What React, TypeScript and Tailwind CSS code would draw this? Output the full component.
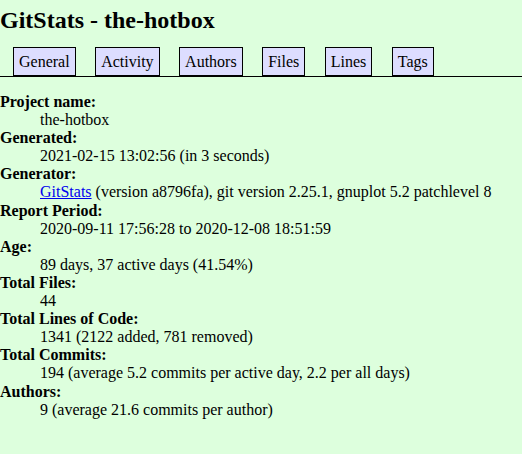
const tabs = ["General", "Activity", "Authors", "Files", "Lines", "Tags"];

const rows: { label: string; value: React.ReactNode }[] = [
  { label: "Project name", value: "the-hotbox" },
  { label: "Generated", value: "2021-02-15 13:02:56 (in 3 seconds)" },
  {
    label: "Generator",
    value: (
      <>
        <a href="#" className="text-[#0000ee] underline">
          GitStats
        </a>{" "}
        (version a8796fa), git version 2.25.1, gnuplot 5.2 patchlevel 8
      </>
    ),
  },
  { label: "Report Period", value: "2020-09-11 17:56:28 to 2020-12-08 18:51:59" },
  { label: "Age", value: "89 days, 37 active days (41.54%)" },
  { label: "Total Files", value: "44" },
  { label: "Total Lines of Code", value: "1341 (2122 added, 781 removed)" },
  { label: "Total Commits", value: "194 (average 5.2 commits per active day, 2.2 per all days)" },
  { label: "Authors", value: "9 (average 21.6 commits per author)" },
];

export default function App() {
  return (
    <div className="min-h-[454px] w-[522px] bg-[#ddffdd] text-black font-['Liberation_Serif',serif] text-[16px]">
      <h1 className="pt-[6px] text-[24px] font-bold leading-[28px]">GitStats - the-hotbox</h1>
      <div className="mt-[13px] flex items-end gap-[19.5px] border-b border-black pl-[13px]">
        {tabs.map((t) => (
          <a
            key={t}
            href="#"
            className="h-[29px] border border-black bg-[#ddddff] px-[5px] pt-[4px] leading-[19px] text-black"
          >
            {t}
          </a>
        ))}
      </div>
      <dl className="mt-4 leading-[18.1px]">
        {rows.map((r) => (
          <div key={r.label}>
            <dt className="font-bold">{r.label}:</dt>
            <dd className="pl-10">{r.value}</dd>
          </div>
        ))}
      </dl>
    </div>
  );
}
